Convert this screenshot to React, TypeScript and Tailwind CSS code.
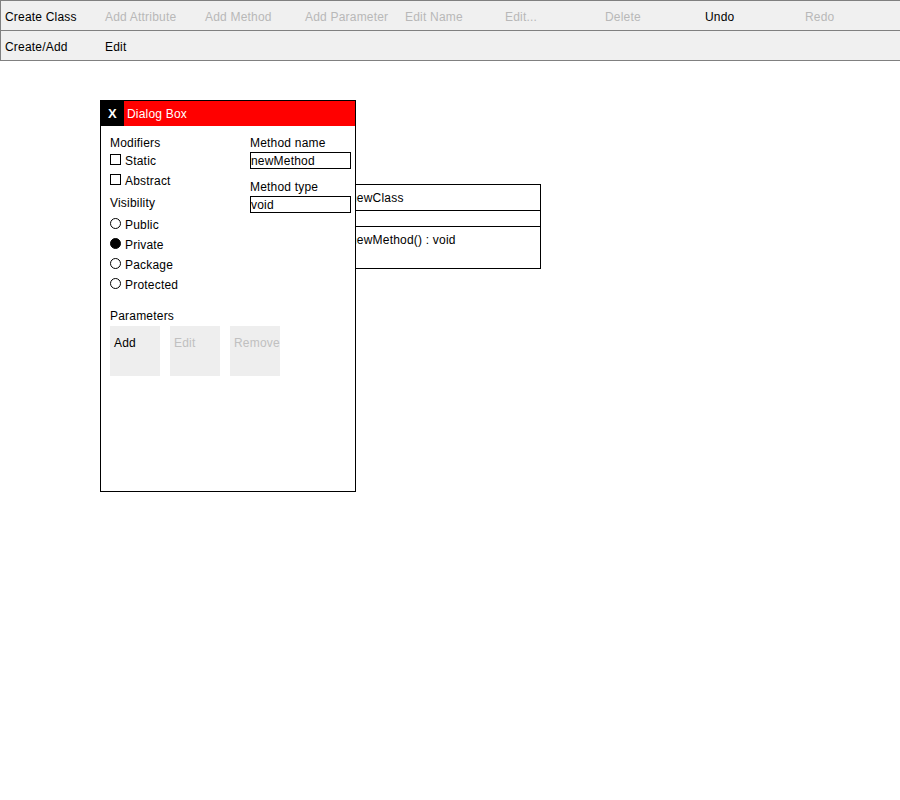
import React from 'react';

const ROW1 = [
  { label: 'Create Class', enabled: true },
  { label: 'Add Attribute', enabled: false },
  { label: 'Add Method', enabled: false },
  { label: 'Add Parameter', enabled: false },
  { label: 'Edit Name', enabled: false },
  { label: 'Edit...', enabled: false },
  { label: 'Delete', enabled: false },
  { label: 'Undo', enabled: true },
  { label: 'Redo', enabled: false },
];

const ROW2 = [
  { label: 'Create/Add', enabled: true },
  { label: 'Edit', enabled: true },
];

const VISIBILITY = ['Public', 'Private', 'Package', 'Protected'];

function ToolButton({ label, enabled }: { label: string; enabled: boolean }) {
  return (
    <div
      className={`w-[100px] shrink-0 pl-[4px] pt-[3px] leading-[26px] whitespace-nowrap ${
        enabled ? 'text-black' : 'text-[#b8b8b8]'
      }`}
    >
      {label}
    </div>
  );
}

function Checkbox({ label }: { label: string }) {
  return (
    <div className="flex h-[20px] items-center">
      <span className="mb-[3px] h-[11px] w-[11px] border border-black bg-white" />
      <span className="ml-[4px]">{label}</span>
    </div>
  );
}

function Radio({ label, checked }: { label: string; checked?: boolean }) {
  return (
    <div className="flex h-[20px] items-center">
      <span
        className={`mb-[3px] h-[11px] w-[11px] rounded-full border border-black ${
          checked ? 'bg-black' : 'bg-white'
        }`}
      />
      <span className="ml-[4px]">{label}</span>
    </div>
  );
}

function ParamButton({ label, enabled }: { label: string; enabled: boolean }) {
  return (
    <div
      className={`h-[50px] w-[50px] shrink-0 overflow-hidden whitespace-nowrap bg-[#eeeeee] pl-[4px] pt-[9px] leading-[16px] ${
        enabled ? 'text-black' : 'text-[#c0c0c0]'
      }`}
    >
      {label}
    </div>
  );
}

function DialogBox() {
  return (
    <div className="absolute left-[100px] top-[100px] flex h-[392px] w-[256px] flex-col border border-black bg-white">
      <div className="flex h-[25px] items-stretch bg-[#ff0000]">
        <div className="flex w-[23px] items-center justify-center bg-black text-[13px] font-bold text-white">
          X
        </div>
        <div className="pl-[3px] pt-[1px] leading-[24px] text-white">Dialog Box</div>
      </div>
      <div className="flex pl-[9px]">
        <div className="flex w-[140px] shrink-0 flex-col pt-[9px]">
          <div className="h-[16px] leading-[16px]">Modifiers</div>
          <Checkbox label="Static" />
          <Checkbox label="Abstract" />
          <div className="mt-[2px] h-[20px] leading-[20px]">Visibility</div>
          <div className="mt-[2px] flex flex-col">
            {VISIBILITY.map((v) => (
              <Radio key={v} label={v} checked={v === 'Private'} />
            ))}
          </div>
          <div className="mt-[12px] h-[19px] leading-[19px]">Parameters</div>
          <div className="flex gap-[10px]">
            <ParamButton label="Add" enabled />
            <ParamButton label="Edit" enabled={false} />
            <ParamButton label="Remove" enabled={false} />
          </div>
        </div>
        <div className="flex flex-col pt-[9px]">
          <div className="h-[16px] leading-[16px]">Method name</div>
          <div className="mt-[1px] h-[17px] w-[101px] border border-black pt-[1px] leading-[15px]">newMethod</div>
          <div className="mt-[10px] h-[16px] leading-[16px]">Method type</div>
          <div className="mt-[1px] h-[17px] w-[101px] border border-black pt-[1px] leading-[15px]">void</div>
        </div>
      </div>
    </div>
  );
}

function ClassBox() {
  return (
    <div className="absolute left-[345px] top-[184px] flex h-[85px] w-[196px] flex-col border border-black bg-white">
      <div className="h-[26px] border-b border-black pl-[4px] pt-[1px] leading-[25px]">newClass</div>
      <div className="h-[16px] border-b border-black" />
      <div className="pl-[4px] pt-[5px] leading-[16px]">newMethod() : void</div>
    </div>
  );
}

export default function App() {
  return (
    <div className="relative h-[800px] w-[900px] overflow-hidden bg-white font-['Liberation_Sans',Arial,sans-serif] text-[12px] tracking-[0.2px] text-black">
      <div className="border-y border-l border-[#808080] bg-[#f0f0f0]">
        <div className="flex h-[30px] border-b border-[#808080]">
          {ROW1.map((b) => (
            <ToolButton key={b.label} {...b} />
          ))}
        </div>
        <div className="flex h-[29px]">
          {ROW2.map((b) => (
            <ToolButton key={b.label} {...b} />
          ))}
        </div>
      </div>
      <ClassBox />
      <DialogBox />
    </div>
  );
}
